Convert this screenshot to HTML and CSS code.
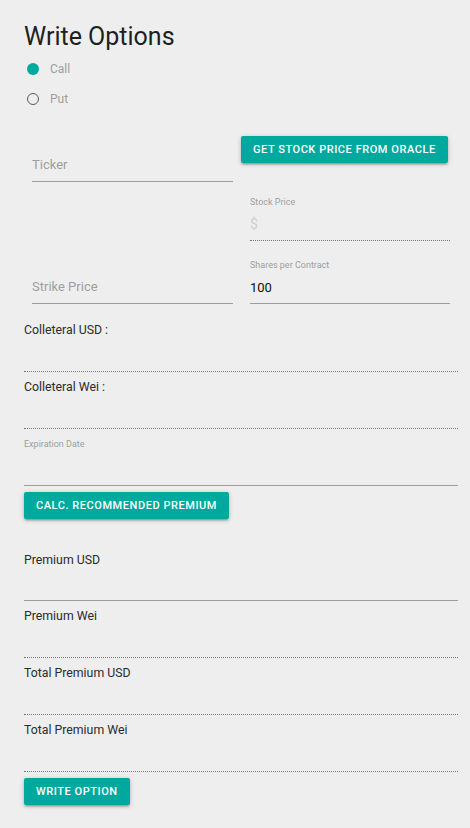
FILE: index.html
```html
<!DOCTYPE html>
<html>
<head>
<meta charset="utf-8">
<link rel="stylesheet" href="styles.css">
</head>
<body>
<main class="page">
  <h1 class="title">Write Options</h1>
  <div class="radios">
    <label class="radio"><span class="dot dot-on"></span><span class="radio-text">Call</span></label>
    <label class="radio"><span class="dot"></span><span class="radio-text">Put</span></label>
  </div>

  <div class="cols">
    <div class="col col-left">
      <div class="box solid ticker"><span class="ph">Ticker</span></div>
      <div class="box solid strike"><span class="ph">Strike Price</span></div>
    </div>
    <div class="col col-right">
      <button class="btn btn-oracle">Get stock price from oracle</button>
      <div class="field stock">
        <div class="small-label">Stock Price</div>
        <div class="box dotted"><span class="ph light">$</span></div>
      </div>
      <div class="field shares">
        <div class="small-label">Shares per Contract</div>
        <div class="box solid"><span class="val">100</span></div>
      </div>
    </div>
  </div>

  <div class="row first">
    <div class="row-label">Colleteral USD :</div>
    <div class="row-box dotted"></div>
  </div>
  <div class="row">
    <div class="row-label">Colleteral Wei :</div>
    <div class="row-box dotted"></div>
  </div>
  <div class="row exp">
    <div class="small-label">Expiration Date</div>
    <div class="row-box solid tall"></div>
  </div>
  <button class="btn btn-calc">Calc. recommended premium</button>

  <div class="row premium">
    <div class="row-label">Premium USD</div>
    <div class="row-box solid short"></div>
  </div>
  <div class="row">
    <div class="row-label">Premium Wei</div>
    <div class="row-box dotted"></div>
  </div>
  <div class="row">
    <div class="row-label">Total Premium USD</div>
    <div class="row-box dotted"></div>
  </div>
  <div class="row">
    <div class="row-label">Total Premium Wei</div>
    <div class="row-box dotted"></div>
  </div>
  <button class="btn btn-write">Write option</button>
</main>
</body>
</html>
```
FILE: styles.css
```css
* { box-sizing: border-box; }
html, body { margin: 0; padding: 0; }
body {
  background: #eeeeee;
  font-family: Roboto, "Noto Sans", sans-serif;
  color: #333;
}
.page {
  padding: 0 12px 30px 24px;
  width: 470px;
}
.title {
  margin: 0;
  padding-top: 21px;
  font-size: 25px;
  font-weight: 400;
  line-height: 32px;
  color: #1f1f1f;
}
.radios {
  display: flex;
  flex-direction: column;
  margin-top: 1px;
}
.radio {
  display: flex;
  align-items: center;
  height: 30px;
  padding-left: 3px;
}
.dot {
  width: 12px;
  height: 12px;
  border-radius: 50%;
  border: 1.5px solid #5a5a5a;
}
.dot-on {
  border: none;
  background: #00a99d;
}
.radio-text {
  margin-left: 11px;
  font-size: 12px;
  color: #9e9e9e;
}
.cols {
  display: grid;
  grid-template-columns: 217px 217px;
  margin-top: 22px;
}
.col {
  display: flex;
  flex-direction: column;
}
.col-left { padding: 10px 8px 0 8px; }
.col-right { padding: 0 8px 0 0; }
.box {
  height: 36px;
  display: flex;
  align-items: center;
  font-size: 13px;
}
.col-left .box { padding-top: 2px; }
.solid { border-bottom: 1px solid #9e9e9e; }
.dotted { border-bottom: 1px dotted rgba(0, 0, 0, 0.5); }
.strike { margin-top: 86px; }
.ph { color: #9e9e9e; }
.ph.light { color: #cfcfcf; font-size: 14px; }
.val { color: #111; font-size: 13px; }
.btn {
  display: block;
  height: 27px;
  padding: 0 12px;
  border: none;
  border-radius: 2px;
  background: #00a99d;
  color: #fff;
  font-family: Roboto, "Noto Sans", sans-serif;
  font-size: 11px;
  font-weight: 500;
  letter-spacing: 0.55px;
  text-transform: uppercase;
  box-shadow: 0 2px 2px 0 rgba(0,0,0,0.14), 0 3px 1px -2px rgba(0,0,0,0.12), 0 1px 5px 0 rgba(0,0,0,0.2);
}
.btn-oracle { align-self: flex-start; }
.field { padding-left: 9px; }
.field .box { height: 33px; }
.stock { margin-top: 33px; }
.shares { margin-top: 18px; }
.small-label {
  height: 12px;
  line-height: 12px;
  font-size: 9px;
  color: #9e9e9e;
}
.row { margin-top: 6px; }
.row.first { margin-top: 17px; }
.row.exp { margin-top: 9px; }
.row.premium { margin-top: 32px; }
.row-label {
  height: 18px;
  line-height: 18px;
  font-size: 12.3px;
  color: #2b2b2b;
}
.row-box { height: 33px; }
.row-box.tall { height: 36px; }
.row-box.short { height: 32px; }
.btn-calc { margin-top: 6px; }
.btn-write { margin-top: 6px; }
```
